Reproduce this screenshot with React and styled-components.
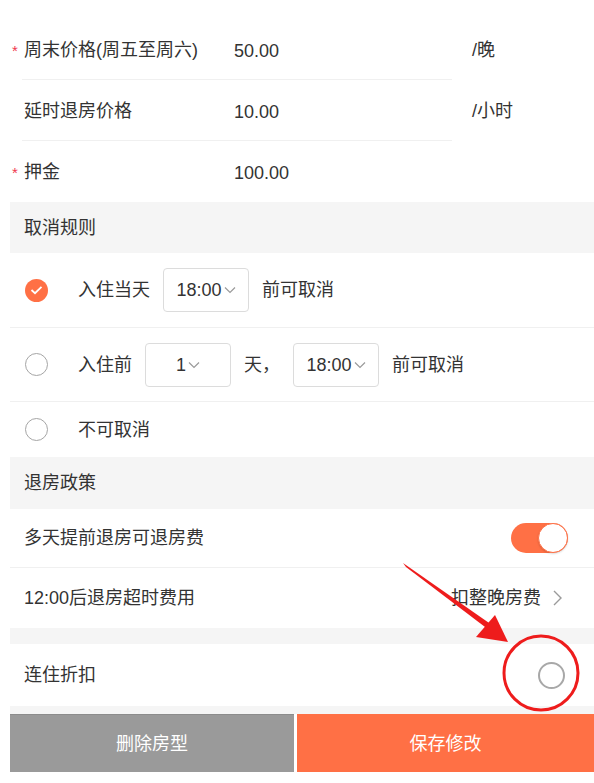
import React from "react";
import styled, { createGlobalStyle } from "styled-components";

const ORANGE = "#ff7045";

const Global = createGlobalStyle`
  html, body { margin: 0; padding: 0; background: #fff; }
  body {
    font-family: "Liberation Sans", "Noto Sans CJK SC", sans-serif;
    color: #333;
    font-size: 18px;
    line-height: 26px;
  }
  * { box-sizing: border-box; }
`;

const Page = styled.div`
  position: relative;
  width: 594px;
  height: 783px;
  padding: 19px 0 0 10px;
  overflow: hidden;
`;

const PriceRow = styled.div`
  position: relative;
  display: flex;
  align-items: center;
  height: 61px;
  padding-left: 14px;
  &::after {
    content: "";
    display: ${(p) => (p.$divider ? "block" : "none")};
    position: absolute;
    left: 12px;
    bottom: 0;
    width: 430px;
    height: 1px;
    background: #f0f0f0;
  }
`;

const Label = styled.span`
  position: relative;
  width: 210px;
  flex: none;
`;

const Star = styled.span`
  position: absolute;
  left: -12px;
  top: 1px;
  color: #f0384d;
  font-size: 15px;
`;

const Value = styled.span`
  width: 238px;
  flex: none;
  padding-top: 2px;
`;

const Unit = styled.span``;

const Band = styled.div`
  display: flex;
  align-items: center;
  height: ${(p) => p.$h || 51}px;
  padding-left: 14px;
  background: #f5f5f5;
`;

const RadioRow = styled.div`
  display: flex;
  align-items: center;
  gap: 13px;
  height: ${(p) => p.$h}px;
  padding-left: 15px;
  border-bottom: ${(p) => (p.$divider ? "1px solid #f0f0f0" : "none")};
`;

const RadioMark = styled.span`
  width: 23px;
  height: 23px;
  border-radius: 50%;
  flex: none;
  display: flex;
  align-items: center;
  justify-content: center;
  margin-right: 17px;
  background: ${(p) => (p.$checked ? ORANGE : "#fff")};
  border: ${(p) => (p.$checked ? "none" : "1.5px solid #a5a5a5")};
`;

const SelectBox = styled.span`
  width: 86px;
  height: 44px;
  flex: none;
  border: 1px solid #dcdcdc;
  border-radius: 4px;
  display: flex;
  align-items: center;
  justify-content: center;
  gap: 2px;
`;

const SettingRow = styled.div`
  display: flex;
  align-items: center;
  justify-content: space-between;
  height: ${(p) => p.$h}px;
  padding: 0 ${(p) => p.$pr}px 0 14px;
  border-bottom: ${(p) => (p.$divider ? "1px solid #f0f0f0" : "none")};
`;

const Toggle = styled.span`
  width: 57px;
  height: 30px;
  border-radius: 15px;
  background: ${ORANGE};
  display: flex;
  justify-content: flex-end;
  align-items: center;
`;

const Knob = styled.span`
  width: 30px;
  height: 30px;
  border-radius: 50%;
  background: #fff;
  border: 1px solid ${ORANGE};
  box-shadow: 0 1px 2px rgba(0, 0, 0, 0.15);
`;

const LinkValue = styled.span`
  display: flex;
  align-items: center;
  gap: 12px;
`;

const Circle = styled.span`
  width: 27px;
  height: 27px;
  border-radius: 50%;
  border: 2px solid #a8a8a8;
`;

const Gap = styled.div`
  height: ${(p) => p.$h}px;
  background: #f5f5f5;
`;

const Footer = styled.div`
  display: grid;
  grid-template-columns: 284px 1fr;
  gap: 3px;
  height: 58px;
`;

const FooterButton = styled.button`
  border: none;
  margin: 0;
  font: inherit;
  font-size: 18px;
  color: #fff;
  background: ${(p) => (p.$primary ? ORANGE : "#9a9a9a")};
  border-top: 1px solid ${(p) => (p.$primary ? ORANGE : "#8c8c8c")};
`;

const Annotation = styled.svg`
  position: absolute;
  left: 0;
  top: 0;
  pointer-events: none;
`;

const Chevron = () => (
  <svg width="12" height="8" viewBox="0 0 12 8">
    <path d="M1 1.5 L6 6.5 L11 1.5" fill="none" stroke="#9a9a9a" strokeWidth="1.2" />
  </svg>
);

const RightChevron = () => (
  <svg width="9" height="16" viewBox="0 0 9 16">
    <path d="M1 1 L8 8 L1 15" fill="none" stroke="#9a9a9a" strokeWidth="1.4" />
  </svg>
);

const Check = () => (
  <svg width="13" height="10" viewBox="0 0 13 10">
    <path d="M1.5 5 L5 8.2 L11.5 1.8" fill="none" stroke="#fff" strokeWidth="1.8" />
  </svg>
);

export default function App() {
  return (
    <>
      <Global />
      <Page>
        <PriceRow $divider>
          <Label><Star>*</Star>周末价格(周五至周六)</Label>
          <Value>50.00</Value>
          <Unit>/晚</Unit>
        </PriceRow>
        <PriceRow $divider>
          <Label>延时退房价格</Label>
          <Value>10.00</Value>
          <Unit>/小时</Unit>
        </PriceRow>
        <PriceRow>
          <Label><Star>*</Star>押金</Label>
          <Value>100.00</Value>
        </PriceRow>

        <Band>取消规则</Band>
        <RadioRow $h={75} $divider>
          <RadioMark $checked><Check /></RadioMark>
          <span>入住当天</span>
          <SelectBox>18:00<Chevron /></SelectBox>
          <span>前可取消</span>
        </RadioRow>
        <RadioRow $h={74} $divider>
          <RadioMark />
          <span>入住前</span>
          <SelectBox>1<Chevron /></SelectBox>
          <span>天，</span>
          <SelectBox>18:00<Chevron /></SelectBox>
          <span>前可取消</span>
        </RadioRow>
        <RadioRow $h={55}>
          <RadioMark />
          <span>不可取消</span>
        </RadioRow>

        <Band $h={52}>退房政策</Band>
        <SettingRow $h={59} $pr={26} $divider>
          <span>多天提前退房可退房费</span>
          <Toggle><Knob /></Toggle>
        </SettingRow>
        <SettingRow $h={60} $pr={32}>
          <span>12:00后退房超时费用</span>
          <LinkValue>扣整晚房费<RightChevron /></LinkValue>
        </SettingRow>
        <Gap $h={16} />
        <SettingRow $h={62} $pr={29}>
          <span>连住折扣</span>
          <Circle />
        </SettingRow>
        <Gap $h={8} />
        <Footer>
          <FooterButton>删除房型</FooterButton>
          <FooterButton $primary>保存修改</FooterButton>
        </Footer>

        <Annotation width="594" height="783" viewBox="0 0 594 783">
          <polygon points="403,563 406,567 489,630 492,625" fill="#ee1c1c" />
          <polygon points="508,642 476,637 495,615" fill="#ee1c1c" />
          <ellipse cx="541" cy="673" rx="37" ry="37" fill="none" stroke="#ee1c1c" strokeWidth="3" />
        </Annotation>
      </Page>
    </>
  );
}
